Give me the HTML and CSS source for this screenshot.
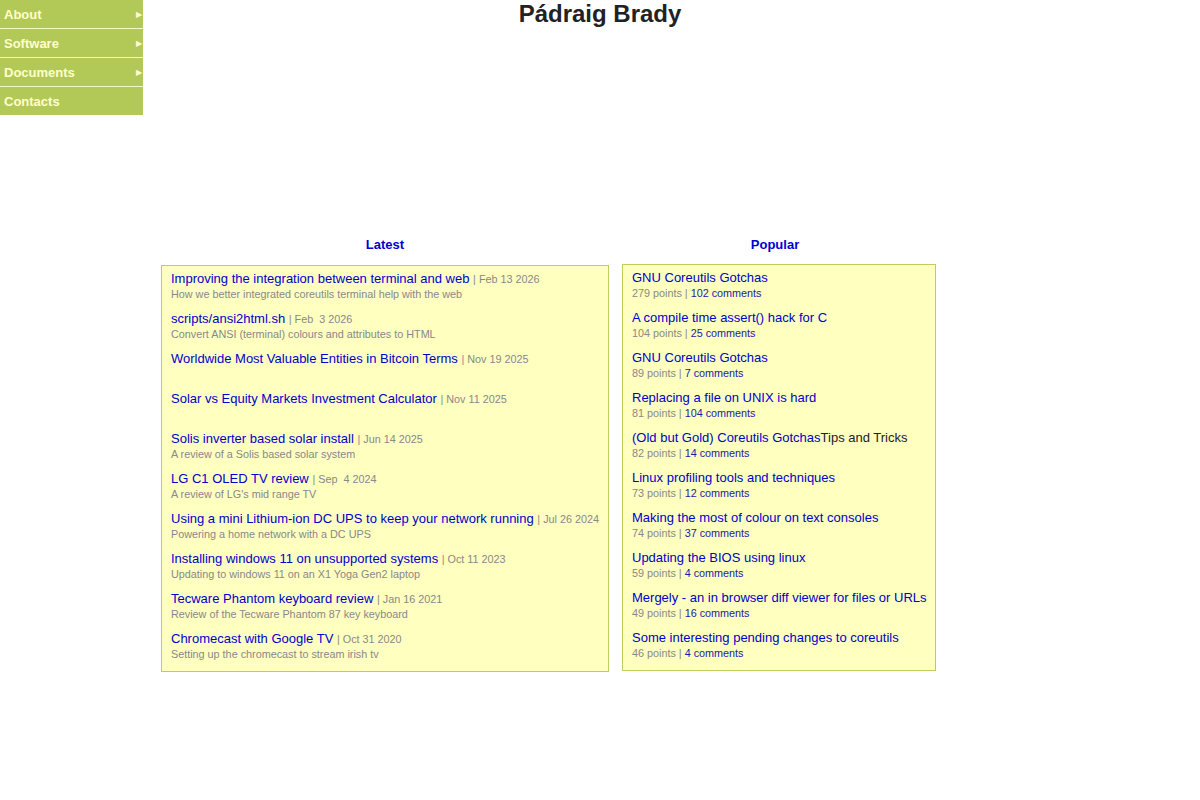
FILE: index.html
```html
<!DOCTYPE html>
<html lang="en">

<head>
    <meta charset="UTF-8">
    <meta name="viewport" content="width=device-width, initial-scale=1.0">
    <title>Pádraig Brady</title>
    <link rel="stylesheet" href="styles.css">
</head>

<body>
    <ul class="menu">
        <li><a href="#">About</a><span class="arrow">&#9654;</span></li>
        <li><a href="#">Software</a><span class="arrow">&#9654;</span></li>
        <li><a href="#">Documents</a><span class="arrow">&#9654;</span></li>
        <li><a href="#">Contacts</a></li>
    </ul>

    <h1 class="title">Pádraig Brady</h1>

    <div class="banner"></div>

    <div class="main">
        <div class="col latest">
            <h2><a href="#">Latest</a></h2>
            <div class="box">
                <div class="item">
                    <a href="#">Improving the integration between terminal and web</a> <span class="date">| Feb 13 2026</span>
                    <div class="desc">How we better integrated coreutils terminal help with the web</div>
                </div>
                <div class="item">
                    <a href="#">scripts/ansi2html.sh</a> <span class="date">| Feb &nbsp;3 2026</span>
                    <div class="desc">Convert ANSI (terminal) colours and attributes to HTML</div>
                </div>
                <div class="item">
                    <a href="#">Worldwide Most Valuable Entities in Bitcoin Terms</a> <span class="date">| Nov 19 2025</span>
                    <div class="desc"></div>
                </div>
                <div class="item">
                    <a href="#">Solar vs Equity Markets Investment Calculator</a> <span class="date">| Nov 11 2025</span>
                    <div class="desc"></div>
                </div>
                <div class="item">
                    <a href="#">Solis inverter based solar install</a> <span class="date">| Jun 14 2025</span>
                    <div class="desc">A review of a Solis based solar system</div>
                </div>
                <div class="item">
                    <a href="#">LG C1 OLED TV review</a> <span class="date">| Sep &nbsp;4 2024</span>
                    <div class="desc">A review of LG's mid range TV</div>
                </div>
                <div class="item">
                    <a href="#">Using a mini Lithium-ion DC UPS to keep your network running</a> <span class="date">| Jul 26 2024</span>
                    <div class="desc">Powering a home network with a DC UPS</div>
                </div>
                <div class="item">
                    <a href="#">Installing windows 11 on unsupported systems</a> <span class="date">| Oct 11 2023</span>
                    <div class="desc">Updating to windows 11 on an X1 Yoga Gen2 laptop</div>
                </div>
                <div class="item">
                    <a href="#">Tecware Phantom keyboard review</a> <span class="date">| Jan 16 2021</span>
                    <div class="desc">Review of the Tecware Phantom 87 key keyboard</div>
                </div>
                <div class="item">
                    <a href="#">Chromecast with Google TV</a> <span class="date">| Oct 31 2020</span>
                    <div class="desc">Setting up the chromecast to stream irish tv</div>
                </div>
            </div>
        </div>

        <div class="col popular">
            <h2><a href="#">Popular</a></h2>
            <div class="box">
                <div class="item">
                    <a href="#">GNU Coreutils Gotchas</a>
                    <div class="desc">279 points | <a href="#">102 comments</a></div>
                </div>
                <div class="item">
                    <a href="#">A compile time assert() hack for C</a>
                    <div class="desc">104 points | <a href="#">25 comments</a></div>
                </div>
                <div class="item">
                    <a href="#">GNU Coreutils Gotchas</a>
                    <div class="desc">89 points | <a href="#">7 comments</a></div>
                </div>
                <div class="item">
                    <a href="#">Replacing a file on UNIX is hard</a>
                    <div class="desc">81 points | <a href="#">104 comments</a></div>
                </div>
                <div class="item">
                    <a href="#">(Old but Gold) Coreutils Gotchas</a><span class="extra">Tips and Tricks</span>
                    <div class="desc">82 points | <a href="#">14 comments</a></div>
                </div>
                <div class="item">
                    <a href="#">Linux profiling tools and techniques</a>
                    <div class="desc">73 points | <a href="#">12 comments</a></div>
                </div>
                <div class="item">
                    <a href="#">Making the most of colour on text consoles</a>
                    <div class="desc">74 points | <a href="#">37 comments</a></div>
                </div>
                <div class="item">
                    <a href="#">Updating the BIOS using linux</a>
                    <div class="desc">59 points | <a href="#">4 comments</a></div>
                </div>
                <div class="item">
                    <a href="#">Mergely - an in browser diff viewer for files or URLs</a>
                    <div class="desc">49 points | <a href="#">16 comments</a></div>
                </div>
                <div class="item">
                    <a href="#">Some interesting pending changes to coreutils</a>
                    <div class="desc">46 points | <a href="#">4 comments</a></div>
                </div>
            </div>
        </div>
    </div>
</body>

</html>
```

FILE: styles.css
```css
* {
    margin: 0;
    padding: 0;
    list-style: none;
}

body {
    font-family: "Liberation Sans", Arial, sans-serif;
    font-size: 13px;
    color: #333;
    background: #fff;
}

a {
    color: #0000cc;
    text-decoration: none;
}

/* left drop menu */
.menu {
    position: absolute;
    top: 0;
    left: 0;
    width: 143px;
}

.menu li {
    height: 28px;
    line-height: 30px;
    background-color: #b3c957;
    border-bottom: 1px solid #f4f8c4;
    position: relative;
}

.menu li:last-child {
    border-bottom: none;
}

.menu a {
    display: block;
    height: 28px;
    padding-left: 4px;
    color: #ffffcc;
    font-weight: bold;
}

.menu .arrow {
    position: absolute;
    right: 1px;
    top: 0;
    font-size: 8px;
    color: #ffffcc;
}

.title {
    text-align: center;
    font-size: 24px;
    line-height: 28px;
    color: #222;
}

.banner {
    height: 209px;
}

.main {
    display: flex;
    align-items: flex-start;
    gap: 13px;
    padding-left: 161px;
}

.latest {
    width: 448px;
}

.popular {
    width: 314px;
}

.col h2 {
    text-align: center;
    font-size: 13px;
    line-height: 16px;
    margin-bottom: 12px;
}

.popular h2 {
    margin-bottom: 11px;
    padding-right: 8px;
}

.box {
    background-color: #ffffc0;
    border: 1px solid #bfcc5e;
    padding: 5px 9px 8px;
}

.item {
    line-height: 16px;
    margin-bottom: 8px;
    white-space: nowrap;
}

.item:last-child {
    margin-bottom: 0;
}

.item .date,
.desc {
    font-size: 10.8px;
    color: #888;
}

.desc {
    height: 16px;
    line-height: 14px;
}

.desc a {
    color: #1a1aaa;
}

.extra {
    color: #222;
}
```
